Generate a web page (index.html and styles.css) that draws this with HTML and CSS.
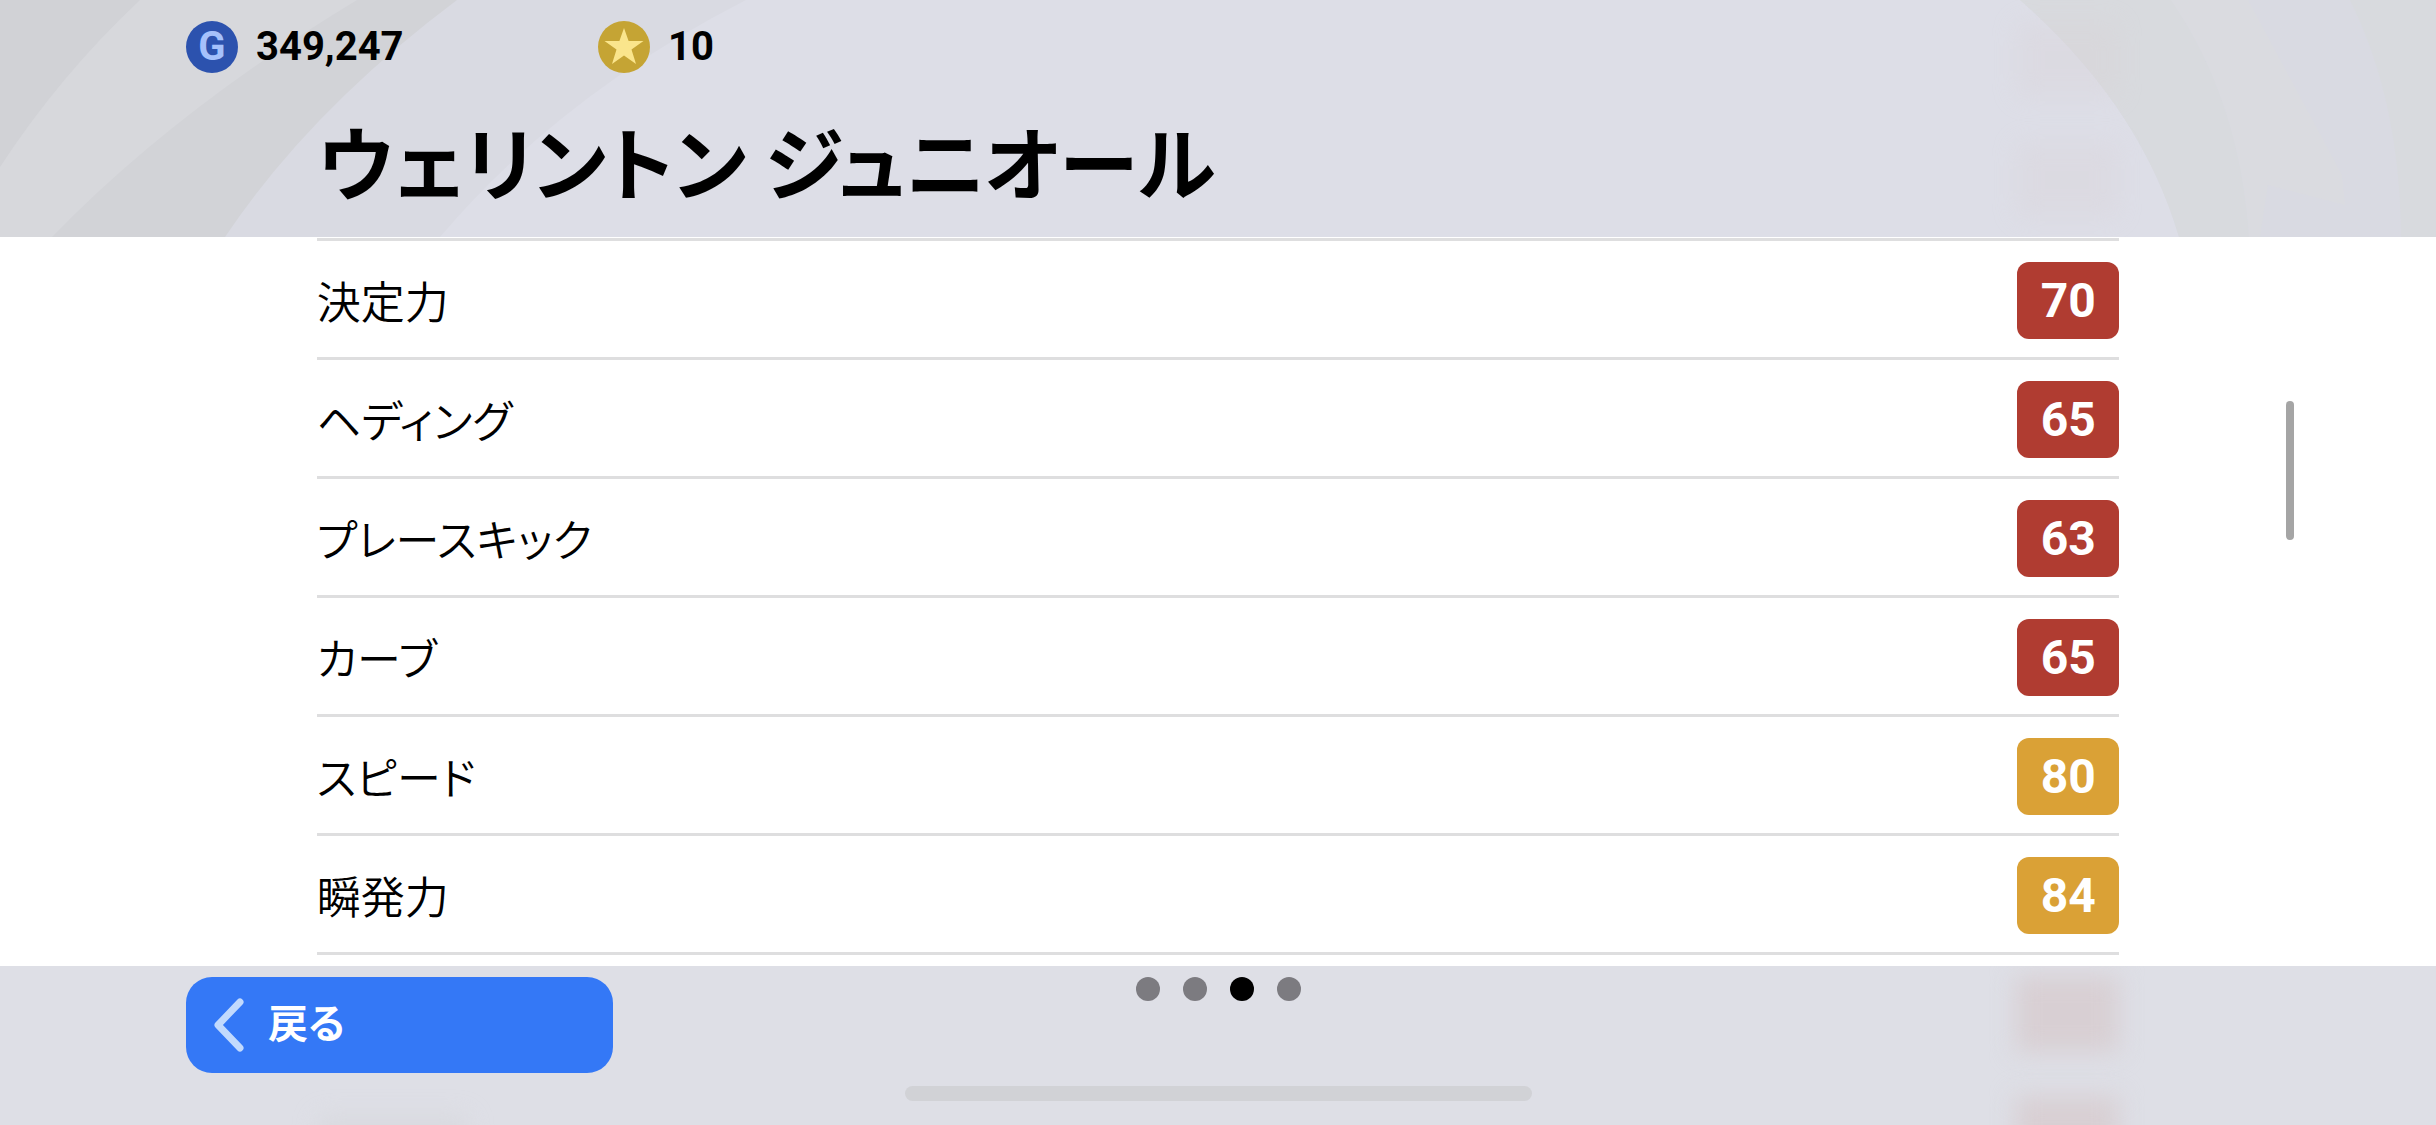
FILE: index.html
```html
<!DOCTYPE html>
<html lang="ja">
<head>
  <meta charset="UTF-8" />
  <title>ウェリントン ジュニオール</title>
  <meta name="viewport" content="width=device-width, initial-scale=1.0" />
  <link rel="stylesheet" href="styles.css">
</head>
<body>
  <header class="header">
    <svg class="header-bg" viewBox="0 0 2436 237" preserveAspectRatio="none" aria-hidden="true">
      <path fill="#d9dae2" d="M0 0H746Q560 95 440 237H0Z"/>
      <path fill="#d2d3d7" d="M0 0H457Q310 110 225 237H0Z"/>
      <path fill="#d7d8dc" d="M0 0H357Q175 110 52 237H0Z"/>
      <path fill="#d1d2d6" d="M0 0H140Q60 75 0 167Z"/>
      <path fill="#d9dae2" d="M2020 0H2436V237H2179Q2140 105 2020 0Z"/>
      <path fill="#d8dade" d="M2020 0H2171Q2240 100 2249 237H2179Q2140 105 2020 0Z"/>
      <path fill="#dadbe0" d="M2171 0H2248L2342 175L2345 205L2268 185L2260 237H2249Q2240 100 2171 0Z"/>
      <path fill="#d8dade" d="M2350 0H2436V237H2401Q2400 100 2350 0Z"/>
    </svg>
    <div class="ghost ghost-top"></div>
    <div class="ghost ghost-mid"></div>

    <div class="wallet">
      <div class="currency">
        <span class="coin coin-gp">G</span>
        <span>349,247</span>
      </div>
      <div class="currency">
        <span class="coin coin-star">
          <svg viewBox="0 0 52 52" aria-hidden="true">
            <path fill="#fae58c" d="M26 7L30.600 20H45.500L33.500 28.500L38 43L26 34.500L14 43L18.500 28.500L6.500 20H21.400Z"/>
          </svg>
        </span>
        <span>10</span>
      </div>
    </div>
    <h1 class="player-name">ウェリントン ジュニオール</h1>
  </header>

  <main class="content">
    <table class="stats">
      <tbody>
        <tr><th scope="row">決定力</th><td><span class="badge red">70</span></td></tr>
        <tr><th scope="row">ヘディング</th><td><span class="badge red">65</span></td></tr>
        <tr><th scope="row">プレースキック</th><td><span class="badge red">63</span></td></tr>
        <tr><th scope="row">カーブ</th><td><span class="badge red">65</span></td></tr>
        <tr><th scope="row">スピード</th><td><span class="badge gold">80</span></td></tr>
        <tr><th scope="row">瞬発力</th><td><span class="badge gold">84</span></td></tr>
      </tbody>
    </table>
    <div class="scroll-thumb"></div>
  </main>

  <footer class="footer">
    <div class="ghost ghost-next"></div>
    <div class="ghost ghost-last"></div>
    <div class="ghost ghost-label"></div>

    <div class="footer-row">
      <button class="back-button" type="button">
        <svg class="chevron" viewBox="0 0 30 54" aria-hidden="true">
          <path d="M26 4L4 27L26 50" fill="none" stroke="#c2dafd" stroke-width="7" stroke-linecap="round" stroke-linejoin="round"/>
        </svg>
        <span class="back-label">戻る</span>
      </button>
      <nav class="pager">
        <button class="dot" type="button" aria-label="1"></button>
        <button class="dot" type="button" aria-label="2"></button>
        <button class="dot active" type="button" aria-label="3" aria-current="true"></button>
        <button class="dot" type="button" aria-label="4"></button>
      </nav>
    </div>
    <div class="home-indicator"></div>
  </footer>
</body>
</html>
```
FILE: styles.css
```css
* {
  box-sizing: border-box;
}

body {
  margin: 0;
  min-height: 100vh;
  display: flex;
  flex-direction: column;
  background: #fff;
  color: #000;
  font-family: "Noto Sans CJK JP", sans-serif;
  font-feature-settings: "palt";
}

/* Header */
.header {
  position: relative;
  overflow: hidden;
  padding: 21px 186px 38px;
  background: #dddee7;
}

.header-bg {
  position: absolute;
  inset: 0;
  width: 100%;
  height: 100%;
}

.wallet {
  position: relative;
  display: flex;
}

.currency {
  display: flex;
  align-items: center;
  gap: 18px;
  width: 412px;
  font-family: Roboto, sans-serif;
  font-size: 40px;
  font-weight: 700;
  line-height: 52px;
}

.coin {
  width: 52px;
  height: 52px;
  border-radius: 50%;
  text-align: center;
}

.coin svg {
  display: block;
}

.coin-gp {
  background: #2c52ae;
  color: #a5c1fb;
}

.coin-star {
  background: #c5a434;
}

.player-name {
  position: relative;
  margin: 46px 0 0;
  padding-left: 132px;
  font-size: 80px;
  font-weight: 700;
  line-height: 80px;
}

/* Stats */
.content {
  position: relative;
  flex: 1;
  padding: 1px 13% 0;
}

.stats {
  width: 100%;
  border-collapse: collapse;
  border-top: 3px solid #dededf;
}

.stats tr {
  height: 119px;
  border-bottom: 3px solid #dededf;
}

.stats th,
.stats td {
  padding: 2px 0 0;
  vertical-align: middle;
}

.stats th {
  text-align: left;
  font-size: 44px;
  font-weight: 350;
}

.stats td {
  width: 102px;
}

.badge {
  display: block;
  border-radius: 12px;
  color: #fff;
  font-family: Roboto, sans-serif;
  font-size: 48px;
  font-weight: 700;
  line-height: 77px;
  text-align: center;
}

.red {
  background: #b03c31;
}

.gold {
  background: #daa136;
}

.scroll-thumb {
  position: absolute;
  top: 164px;
  right: 142px;
  width: 8px;
  height: 139px;
  border-radius: 4px;
  background: #a5a5a5;
}

/* Footer */
.footer {
  position: relative;
  overflow: hidden;
  padding: 11px 186px 24px;
  background: #dedfe6;
}

.footer-row {
  position: relative;
  display: grid;
  grid-template-columns: 1fr auto 1fr;
  align-items: start;
}

.back-button {
  display: flex;
  align-items: center;
  gap: 24px;
  width: 427px;
  height: 96px;
  padding: 0 28px;
  border: none;
  border-radius: 26px;
  background: #3478f6;
  color: #fff;
  font: inherit;
  font-size: 40px;
  font-weight: 700;
  line-height: 40px;
  cursor: pointer;
}

.back-label {
  padding-bottom: 8px;
}

.chevron {
  width: 30px;
  height: 54px;
}

.pager {
  display: flex;
  gap: 23px;
}

.dot {
  width: 24px;
  height: 24px;
  padding: 0;
  border: none;
  border-radius: 50%;
  background: #7c7b80;
}

.dot.active {
  background: #000;
}

.home-indicator {
  position: relative;
  width: 627px;
  height: 15px;
  margin: 13px auto 0;
  border-radius: 8px;
  background: #d1d2d6;
}

/* Badges showing faintly through the bars */
.ghost {
  position: absolute;
  right: 318px;
  width: 102px;
  height: 76px;
  background: #d8cfd3;
  filter: blur(12px);
}

.ghost-top {
  top: 22px;
  opacity: 0.25;
}

.ghost-mid {
  top: 142px;
  opacity: 0.25;
}

.ghost-next {
  top: 10px;
}

.ghost-last {
  top: 130px;
}

.ghost-label {
  top: 150px;
  right: auto;
  left: 318px;
  width: 150px;
  background: #d5d6da;
  opacity: 0.6;
}
```
